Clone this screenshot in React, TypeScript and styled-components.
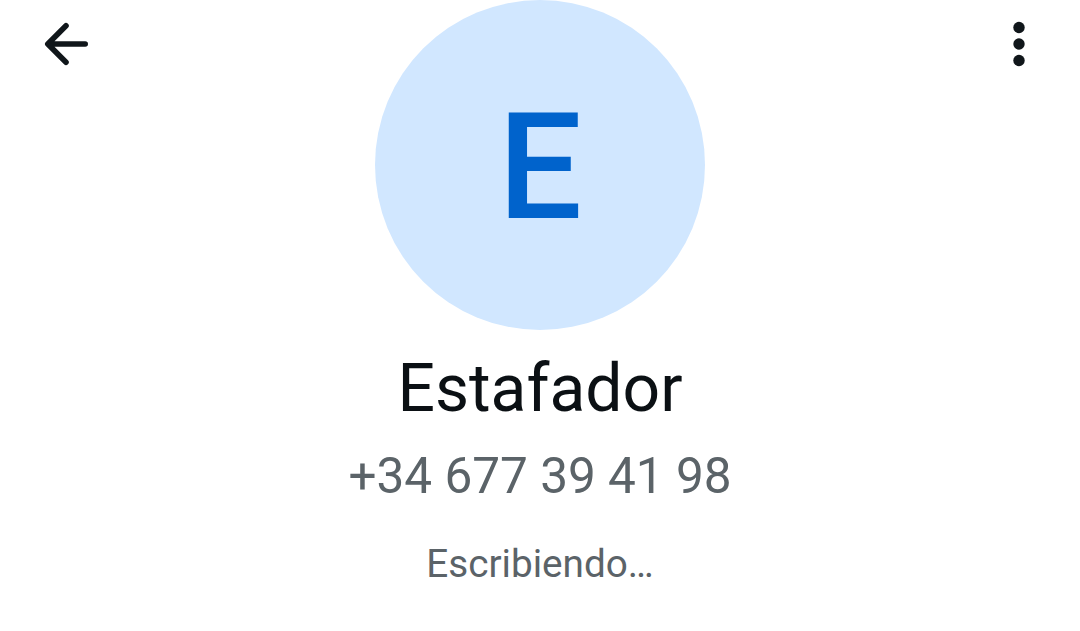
import React from "react";
import styled, { createGlobalStyle } from "styled-components";

const GlobalStyle = createGlobalStyle`
  * { box-sizing: border-box; }
  body { margin: 0; background: #ffffff; font-family: Roboto, sans-serif; }
`;

const Screen = styled.main`
  display: grid;
  grid-template-columns: 1fr auto 1fr;
  width: 1080px;
  height: 631px;
  overflow: hidden;
  background: #ffffff;
`;

const IconButton = styled.button<{ $side: "start" | "end" }>`
  justify-self: ${({ $side }) => $side};
  align-self: start;
  display: flex;
  align-items: center;
  justify-content: center;
  width: 64px;
  height: 64px;
  margin: 12px ${({ $side }) => ($side === "end" ? "29px" : "0")} 0
    ${({ $side }) => ($side === "start" ? "35px" : "0")};
  padding: 0;
  border: 0;
  background: none;
  color: #10161a;
`;

const Profile = styled.section`
  display: flex;
  flex-direction: column;
  align-items: center;
  white-space: nowrap;
`;

const Avatar = styled.div`
  display: flex;
  align-items: center;
  justify-content: center;
  width: 330px;
  height: 330px;
  padding-top: 4px;
  border-radius: 50%;
  background: #d1e7ff;
  color: #0063cc;
  font-size: 149px;
  line-height: 326px;
  font-weight: 500;
`;

const Name = styled.h1`
  margin: 21px 0 0;
  color: #0b1014;
  font-size: 66px;
  line-height: 76px;
  font-weight: 400;
`;

const Phone = styled.div`
  margin-top: 19px;
  color: #5b6368;
  font-size: 49.5px;
  line-height: 60px;
`;

const Status = styled.div`
  margin-top: 34px;
  color: #5b6368;
  font-size: 38.7px;
  line-height: 48px;
`;

export default function App() {
  return (
    <>
      <GlobalStyle />
      <Screen>
        <IconButton $side="start" aria-label="Atrás">
          <svg width="64" height="64" viewBox="0 0 64 64" fill="none" stroke="currentColor" strokeWidth="5.6" strokeLinecap="round" strokeLinejoin="round">
            <path d="M31 13.700 12.800 32l18.200 18.300M13.500 32H50.200" />
          </svg>
        </IconButton>
        <Profile>
          <Avatar>E</Avatar>
          <Name>Estafador</Name>
          <Phone>+34 677 39 41 98</Phone>
          <Status>Escribiendo…</Status>
        </Profile>
        <IconButton $side="end" aria-label="Más opciones">
          <svg width="64" height="64" viewBox="0 0 64 64" fill="currentColor">
            <circle cx="32" cy="15.500" r="5.700" />
            <circle cx="32" cy="32" r="5.700" />
            <circle cx="32" cy="48.500" r="5.700" />
          </svg>
        </IconButton>
      </Screen>
    </>
  );
}
